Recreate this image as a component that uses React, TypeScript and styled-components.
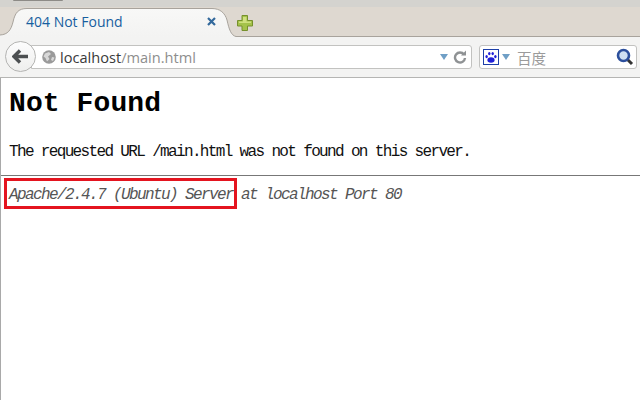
import React from 'react';
import styled, { createGlobalStyle } from 'styled-components';

const GlobalStyle = createGlobalStyle`
  html, body {
    margin: 0;
    padding: 0;
    background: #fff;
    overflow: hidden;
  }
`;

const Window = styled.div`
  width: 640px;
  height: 400px;
  display: flex;
  flex-direction: column;
  overflow: hidden;
  font-family: 'Open Sans', 'Noto Sans', sans-serif;
`;

const TitleBar = styled.div`
  height: 7px;
  flex: none;
  padding-left: 13px;
  background: #d4d3cf;
`;

const TitleButton = styled.div`
  width: 50px;
  height: 1px;
  background: #8d8b87;
  border-radius: 0 0 8px 8px;
`;

const TabStrip = styled.div`
  height: 30px;
  flex: none;
  box-sizing: border-box;
  display: flex;
  align-items: flex-start;
  background: #ded8d0;
  border-bottom: 1px solid #a8a39c;
`;

const Tab = styled.div`
  position: relative;
  width: 236px;
  height: 30px;
  flex: none;
  box-sizing: border-box;
  padding: 0 20px 2px 26px;
  display: flex;
  align-items: center;
  justify-content: space-between;
`;

const TabShape = styled.svg`
  position: absolute;
  left: 0;
  top: 0;
`;

const TabTitle = styled.span`
  position: relative;
  font-size: 14px;
  color: #175e9f;
`;

const TabClose = styled.svg`
  position: relative;
`;

const NewTab = styled.svg`
  flex: none;
  margin: 7px 0 0 0;
`;

const NavBar = styled.div`
  height: 41px;
  flex: none;
  box-sizing: border-box;
  padding: 8px 3px 0 5px;
  display: flex;
  align-items: flex-start;
  gap: 7px;
  background: #f3f3f2;
  border-bottom: 1px solid #b5b5b3;
`;

const UrlWrap = styled.div`
  position: relative;
  flex: 1;
  height: 24px;
`;

const BackButton = styled.div`
  position: absolute;
  left: 0;
  top: -4px;
  width: 31px;
  height: 31px;
  box-sizing: border-box;
  border: 1px solid #b4b4b2;
  border-radius: 50%;
  background: linear-gradient(#fdfdfd, #eeeeed);
  display: flex;
  align-items: center;
  justify-content: center;
`;

const UrlField = styled.div`
  height: 24px;
  box-sizing: border-box;
  margin-left: 26px;
  padding: 0 4px 0 9px;
  display: flex;
  align-items: center;
  gap: 3px;
  background: #fff;
  border: 1px solid #c2c2c0;
  border-radius: 0 3px 3px 0;
`;

const Host = styled.span`
  font-size: 14.6px;
  color: #3a3a3a;
`;

const Path = styled.span`
  color: #8e8e8e;
`;

const UrlTools = styled.div`
  margin-left: auto;
  display: flex;
  align-items: center;
  gap: 5px;
`;

const SearchField = styled.div`
  width: 158px;
  height: 24px;
  flex: none;
  box-sizing: border-box;
  padding: 0 2px 0 3px;
  display: flex;
  align-items: center;
  background: #fff;
  border: 1px solid #c2c2c0;
  border-radius: 3px;
`;

const EngineIcon = styled.svg`
  flex: none;
`;

const EngineCaret = styled.svg`
  flex: none;
  margin: 0 7px 0 3px;
`;

const SearchHint = styled.span`
  flex: 1;
  font-size: 14.5px;
  color: #9b9b9b;
  font-family: 'Noto Sans CJK SC', 'Noto Sans', sans-serif;
`;

const Page = styled.main`
  position: relative;
  flex: 1;
  box-sizing: border-box;
  padding-top: 10px;
  background: #fff;
  border-left: 1px solid #a9a9a9;
  font-family: 'Liberation Mono', monospace;
  color: #111;
`;

const Heading = styled.h1`
  margin: 0 0 23px 8px;
  height: 32px;
  line-height: 32px;
  font-size: 28px;
  letter-spacing: 0.1px;
  font-weight: bold;
  color: #000;
`;

const Message = styled.p`
  margin: 0 0 14px 8px;
  height: 18px;
  line-height: 18px;
  font-size: 16px;
  letter-spacing: -1.65px;
  white-space: nowrap;
`;

const Rule = styled.hr`
  margin: 0;
  height: 1px;
  border: 0;
  background: #777;
`;

const Address = styled.address`
  margin: 10px 0 0 8px;
  height: 18px;
  line-height: 18px;
  font-size: 16px;
  letter-spacing: -1.6px;
  font-style: italic;
  color: #555;
  white-space: nowrap;
`;

const Highlight = styled.div`
  position: absolute;
  left: 3px;
  top: 100px;
  width: 233px;
  height: 31px;
  box-sizing: border-box;
  border: 3px solid #e4141f;
`;

export default function App() {
  return (
    <Window>
      <GlobalStyle />
      <TitleBar>
        <TitleButton />
      </TitleBar>
      <TabStrip>
        <Tab>
          <TabShape width="236" height="30" viewBox="0 0 236 30">
            <defs>
              <linearGradient id="tabFill" x1="0" y1="0" x2="0" y2="1">
                <stop offset="0" stopColor="#f8f8f7" />
                <stop offset="1" stopColor="#f3f3f2" />
              </linearGradient>
            </defs>
            <path
              d="M0 28C8 27.5 11 23 13 15C15 6 18 1.5 27 1.5H212C220 1.5 225 6 227 13C229 22 231 28.5 236 29.5V30H0Z"
              fill="url(#tabFill)"
            />
            <path
              d="M0 28C8 27.5 11 23 13 15C15 6 18 1.5 27 1.5H212C220 1.5 225 6 227 13C229 22 231 28.5 236 29.5"
              fill="none"
              stroke="#a8a39c"
            />
          </TabShape>
          <TabTitle>404 Not Found</TabTitle>
          <TabClose width="9" height="9" viewBox="0 0 9 9">
            <path d="M1 1L8 8M8 1L1 8" stroke="#33699c" strokeWidth="2.2" />
          </TabClose>
        </Tab>
        <NewTab width="18" height="18" viewBox="0 0 18 18">
          <path
            d="M6 1.5H11.5V6.5H16.5V12H11.5V16.5H6V12H1.5V6.5H6Z"
            fill="#a4c24a"
            stroke="#76902c"
          />
          <path d="M7 3H10.5V7.5H15V9H3V7.5H7Z" fill="#cfe07f" />
        </NewTab>
      </TabStrip>
      <NavBar>
        <UrlWrap>
          <UrlField>
            <svg width="16" height="16" viewBox="0 0 16 16">
              <circle cx="8" cy="8" r="6.8" fill="#9a9a9a" />
              <path d="M4 4.5L8 3L10 5L7 7.5L8.5 10L6 12.5L4.5 9L2.5 7.5Z" fill="#d8d8d8" />
              <path d="M11 8L13.5 8.5L12 12L10 11Z" fill="#d8d8d8" />
            </svg>
            <Host>
              localhost<Path>/main.html</Path>
            </Host>
            <UrlTools>
              <svg width="8" height="6" viewBox="0 0 8 6">
                <path d="M0 0H8L4 6Z" fill="#6f9fc6" />
              </svg>
              <svg width="14" height="14" viewBox="0 0 14 14">
                <path
                  d="M11 4.5A5 5 0 1 0 12 8"
                  fill="none"
                  stroke="#8f9294"
                  strokeWidth="2.4"
                />
                <path d="M8 5.5H13V0.5Z" fill="#8f9294" />
              </svg>
            </UrlTools>
          </UrlField>
          <BackButton>
            <svg width="17" height="15" viewBox="0 0 17 15">
              <path d="M8 1.5L2 7.5L8 13.5M3 7.5H16" fill="none" stroke="#4c4f51" strokeWidth="3.4" />
            </svg>
          </BackButton>
        </UrlWrap>
        <SearchField>
          <EngineIcon width="16" height="16" viewBox="0 0 16 16">
            <rect x="0.5" y="0.5" width="15" height="15" fill="#fff" stroke="#1d3fa8" />
            <ellipse cx="8" cy="11" rx="3.6" ry="2.8" fill="#2020d8" />
            <ellipse cx="3.6" cy="7.6" rx="1.2" ry="1.7" fill="#2020d8" />
            <ellipse cx="6.3" cy="4.6" rx="1.2" ry="1.7" fill="#2020d8" />
            <ellipse cx="9.7" cy="4.6" rx="1.2" ry="1.7" fill="#2020d8" />
            <ellipse cx="12.4" cy="7.6" rx="1.2" ry="1.7" fill="#2020d8" />
          </EngineIcon>
          <EngineCaret width="8" height="6" viewBox="0 0 8 6">
            <path d="M0 0H8L4 6Z" fill="#6f9fc6" />
          </EngineCaret>
          <SearchHint>百度</SearchHint>
          <svg width="18" height="18" viewBox="0 0 18 18">
            <path d="M11 11L16 16" stroke="#333" strokeWidth="3" />
            <circle cx="7.5" cy="7.5" r="5.5" fill="#cfe0f2" stroke="#2c4f9c" strokeWidth="2.6" />
          </svg>
        </SearchField>
      </NavBar>
      <Page>
        <Heading>Not Found</Heading>
        <Message>The requested URL /main.html was not found on this server.</Message>
        <Rule />
        <Address>Apache/2.4.7 (Ubuntu) Server at localhost Port 80</Address>
        <Highlight />
      </Page>
    </Window>
  );
}
